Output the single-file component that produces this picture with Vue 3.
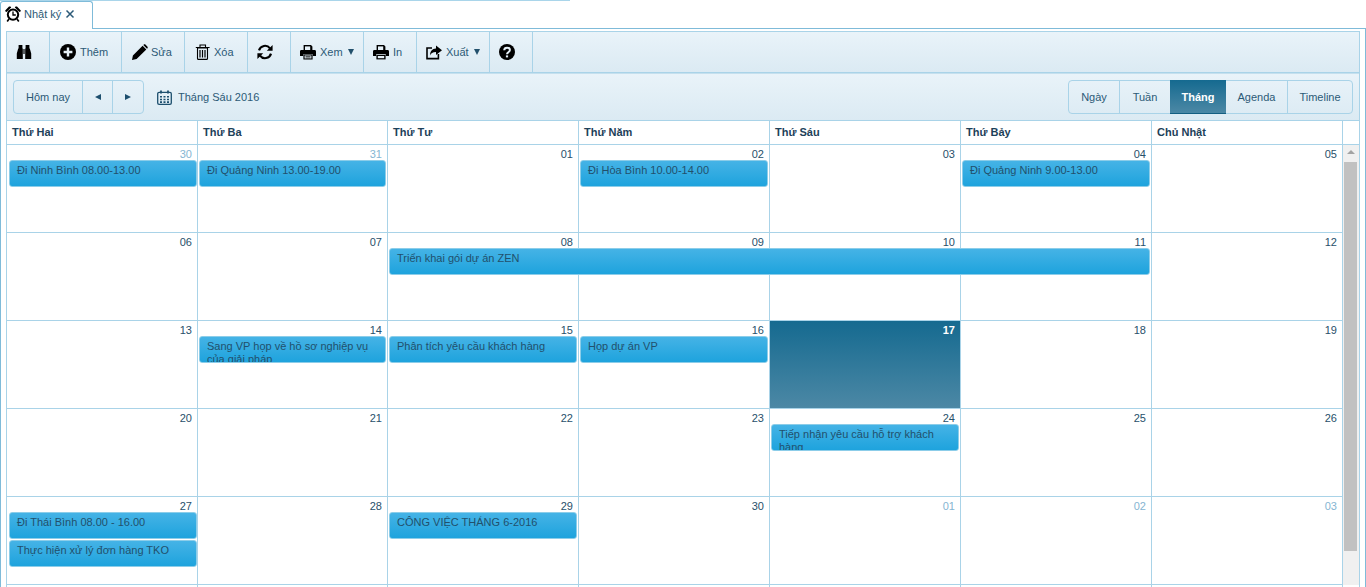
<script setup>
const days = ['Thứ Hai', 'Thứ Ba', 'Thứ Tư', 'Thứ Năm', 'Thứ Sáu', 'Thứ Bảy', 'Chủ Nhật']

// other: ngày thuộc tháng khác, today: ô hôm nay
const weeks = [
  {
    cells: [
      { n: '30', other: true }, { n: '31', other: true }, { n: '01' }, { n: '02' }, { n: '03' }, { n: '04' }, { n: '05' },
    ],
    events: [
      { col: 1, span: 1, row: 2, text: 'Đi Ninh Bình 08.00-13.00' },
      { col: 2, span: 1, row: 2, text: 'Đi Quảng Ninh 13.00-19.00' },
      { col: 4, span: 1, row: 2, text: 'Đi Hòa Bình 10.00-14.00' },
      { col: 6, span: 1, row: 2, text: 'Đi Quảng Ninh 9.00-13.00' },
    ],
  },
  {
    cells: [{ n: '06' }, { n: '07' }, { n: '08' }, { n: '09' }, { n: '10' }, { n: '11' }, { n: '12' }],
    events: [{ col: 3, span: 4, row: 2, text: 'Triển khai gói dự án ZEN' }],
  },
  {
    cells: [{ n: '13' }, { n: '14' }, { n: '15' }, { n: '16' }, { n: '17', today: true }, { n: '18' }, { n: '19' }],
    events: [
      { col: 2, span: 1, row: 2, text: 'Sang VP họp về hồ sơ nghiệp vụ của giải pháp' },
      { col: 3, span: 1, row: 2, text: 'Phân tích yêu cầu khách hàng' },
      { col: 4, span: 1, row: 2, text: 'Họp dự án VP' },
    ],
  },
  {
    cells: [{ n: '20' }, { n: '21' }, { n: '22' }, { n: '23' }, { n: '24' }, { n: '25' }, { n: '26' }],
    events: [{ col: 5, span: 1, row: 2, text: 'Tiếp nhận yêu cầu hỗ trợ khách hàng' }],
  },
  {
    cells: [
      { n: '27' }, { n: '28' }, { n: '29' }, { n: '30' }, { n: '01', other: true }, { n: '02', other: true }, { n: '03', other: true },
    ],
    events: [
      { col: 1, span: 1, row: 2, text: 'Đi Thái Bình 08.00 - 16.00' },
      { col: 1, span: 1, row: 4, text: 'Thực hiện xử lý đơn hàng TKO' },
      { col: 3, span: 1, row: 2, text: 'CÔNG VIỆC THÁNG 6-2016' },
    ],
  },
  {
    cells: [{ n: '' }, { n: '' }, { n: '' }, { n: '' }, { n: '' }, { n: '' }, { n: '' }],
    events: [],
  },
]

const views = ['Ngày', 'Tuần', 'Tháng', 'Agenda', 'Timeline']
</script>

<template>
  <div class="page">
    <div class="topline"></div>
    <div class="tabs">
      <div class="tab">
        <svg class="tab__clock" viewBox="0 0 16 16" width="16" height="16">
          <circle cx="8" cy="8.6" r="5.2" fill="#fff" stroke="#000" stroke-width="2" />
          <path d="M8 5.4v3.6h2.8" fill="none" stroke="#000" stroke-width="1.3" />
          <path d="M.2 4.6 4 .6c1-.5 2 0 2.2.9L1.5 6C.7 6 .1 5.4.2 4.6zM15.8 4.6 12 .6c-1-.5-2 0-2.2.9L14.5 6c.8 0 1.4-.6 1.3-1.4z" fill="#000" />
          <path d="M4 13l-1.8 2.4M12 13l1.8 2.4" stroke="#000" stroke-width="1.7" />
        </svg>
        <span>Nhật ký</span>
        <svg class="tab__close" viewBox="0 0 10 10" width="10" height="10">
          <path d="M1.5 1.5l7 7M8.5 1.5l-7 7" stroke="#2b5a78" stroke-width="1.5" />
        </svg>
      </div>
    </div>

    <div class="panel">
      <div class="inner">
        <div class="toolbar">
          <button class="tool">
            <svg viewBox="0 0 16 16" width="16" height="16">
              <path d="M2.6 1h3.8v3.4h.4V15h-6V9.600l1.400-5.200h.4zM9.600 1h3.800v3.400h.4l1.400 5.200V15h-6V4.400h.4zM7.400 5h1.200v5H7.400z" fill="#000" />
            </svg>
          </button>
          <button class="tool">
            <svg viewBox="0 0 16 16" width="16" height="16">
              <circle cx="8" cy="8" r="8" fill="#000" />
              <path d="M8 3.6v8.8M3.6 8h8.8" stroke="#e6f1f8" stroke-width="2.4" />
            </svg>
            <span>Thêm</span>
          </button>
          <button class="tool">
            <svg viewBox="0 0 16 16" width="16" height="16">
              <path d="M0 16l.9-4.6L10.6 1.700l3.700 3.700L4.600 15.100zM11.600.7c.6-.6 1.400-.6 2 0l1.700 1.700c.6.6.6 1.400 0 2l-.3.3-3.700-3.700z" fill="#000" />
            </svg>
            <span>Sửa</span>
          </button>
          <button class="tool">
            <svg viewBox="0 0 16 16" width="16" height="16">
              <path d="M2.5 4h10v10.400c0 .6-.4 1-1 1h-8c-.6 0-1-.4-1-1zM.8 3.500h13.800M5 3V1h5.500v2" fill="none" stroke="#000" stroke-width="1.1" />
              <path d="M5 6v7.500M7.500 6v7.500M10 6v7.500" stroke="#000" stroke-width="1.2" />
            </svg>
            <span>Xóa</span>
          </button>
          <button class="tool">
            <svg viewBox="0 0 16 16" width="16" height="16">
              <path d="M2 6.400A6.200 6.200 0 0 1 13 4.400M14 9.600A6.200 6.200 0 0 1 3 11.600" fill="none" stroke="#000" stroke-width="2.1" />
              <path d="M15.600 1v5.800H9.800zM.4 15V9.200h5.800z" fill="#000" />
            </svg>
          </button>
          <button class="tool">
            <svg viewBox="0 0 16 16" width="16" height="16">
              <path d="M3.600 1h7.400l1.400 1.400V6H3.600zM0 7.400C0 6.600.6 6 1.400 6h13.200c.8 0 1.400.6 1.400 1.400V12h-3.200v-1.800H3.200V12H0z" fill="#000" />
              <path d="M5 2.400h5.200V6H5z" fill="#e6f1f8" />
              <path d="M4 11h8v4H4z" fill="#e6f1f8" stroke="#000" stroke-width="1.2" />
              <path d="M5.500 12.600h5M5.500 14h5" stroke="#000" stroke-width=".7" />
            </svg>
            <span>Xem</span>
            <i class="caret"></i>
          </button>
          <button class="tool">
            <svg viewBox="0 0 16 16" width="16" height="16">
              <path d="M3.600 1h7.400l1.400 1.400V6H3.600zM0 7.400C0 6.600.6 6 1.400 6h13.200c.8 0 1.400.6 1.400 1.400V12h-3.200v-1.800H3.200V12H0z" fill="#000" />
              <path d="M5 2.400h5.200V6H5z" fill="#e6f1f8" />
              <path d="M3.400 11h9.200v4.400H3.400z" fill="#000" />
              <path d="M4.800 12h6.400v2.200H4.800z" fill="#e6f1f8" />
            </svg>
            <span>In</span>
          </button>
          <button class="tool">
            <svg viewBox="0 0 16 16" width="16" height="16">
              <path d="M6 4H1v10.600h11.400V10" fill="none" stroke="#000" stroke-width="1.6" />
              <path d="M10 1.600l6 4.600-6 4.700V8C6.600 8 4.800 9.200 4 11.600 4 7.200 6.200 4.600 10 4.400z" fill="#000" />
            </svg>
            <span>Xuất</span>
            <i class="caret"></i>
          </button>
          <button class="tool">
            <svg viewBox="0 0 16 16" width="16" height="16">
              <circle cx="8" cy="8" r="8" fill="#000" />
              <path d="M5.200 6.200C5.300 4.600 6.400 3.700 8 3.700c1.700 0 2.900 1 2.900 2.400 0 2.200-2.900 2.200-2.900 4.200" fill="none" stroke="#e6f1f8" stroke-width="2" />
              <path d="M6.900 11.400h2.200v2H6.900z" fill="#e6f1f8" />
            </svg>
          </button>
        </div>

        <div class="nav">
          <div class="group">
            <button class="group__btn group__btn--today">Hôm nay</button>
            <button class="group__btn group__btn--arrow"><i class="arrow arrow--left"></i></button>
            <button class="group__btn group__btn--arrow"><i class="arrow arrow--right"></i></button>
          </div>
          <svg class="nav__cal" viewBox="0 0 15 15" width="15" height="15">
            <rect x=".7" y="2.3" width="13.6" height="12" rx="1.4" fill="none" stroke="#1d4f6e" stroke-width="1.3" />
            <path d="M4 .4v3.200M11 .4v3.200" stroke="#1d4f6e" stroke-width="1.8" />
            <path d="M3 6h2v1.600H3zM6.500 6h2v1.600h-2zM10 6h2v1.600h-2zM3 8.700h2v1.600H3zM6.500 8.700h2v1.600h-2zM10 8.700h2v1.600h-2zM3 11.300h2v1.600H3zM6.500 11.300h2v1.600h-2zM10 11.300h2v1.600h-2z" fill="#1d4f6e" />
          </svg>
          <span class="nav__title">Tháng Sáu 2016</span>
          <div class="views">
            <button
              v-for="v in views"
              :key="v"
              class="views__btn"
              :class="{ 'views__btn--on': v === 'Tháng' }"
            >{{ v }}</button>
          </div>
        </div>

        <div class="head">
          <div class="cols">
            <div v-for="d in days" :key="d" class="head__col">{{ d }}</div>
          </div>
        </div>

        <div class="body">
          <div class="weeks">
            <div v-for="(w, i) in weeks" :key="i" class="week cols">
              <div
                v-for="(c, j) in w.cells"
                :key="j"
                class="cell"
                :class="{ 'cell--other': c.other, 'cell--today': c.today }"
                :style="{ gridColumn: j + 1 }"
              >{{ c.n }}</div>
              <div
                v-for="e in w.events"
                :key="e.text"
                class="event"
                :class="{ 'event--first': e.col === 1 }"
                :style="{ gridColumn: `${e.col} / span ${e.span}`, gridRow: e.row }"
              >{{ e.text }}</div>
            </div>
          </div>
          <div class="scroll">
            <i class="scroll__up"></i>
            <div class="scroll__thumb"></div>
          </div>
        </div>
      </div>
    </div>
  </div>
</template>

<style>
html, body { margin: 0; background: #fff; overflow: hidden; }
</style>

<style scoped>
.page {
  height: 587px;
  overflow: hidden;
  font-family: "Liberation Sans", Arial, sans-serif;
  font-size: 11px;
  color: #2c5a76;
}
button {
  font: inherit;
  color: inherit;
  background: none;
  border: 0;
  padding: 0;
  margin: 0;
}

.topline { width: 570px; height: 1px; background: #a9d5ea; }
.tabs { height: 27px; }
.tab {
  position: relative;
  z-index: 2;
  box-sizing: border-box;
  width: 93px;
  height: 28px;
  display: flex;
  align-items: center;
  padding: 0 0 3px 4px;
  border: 1px solid #7fbbd9;
  border-bottom: 0;
  border-radius: 3px 3px 0 0;
  background: #fff;
}
.tab__clock { margin-right: 3px; }
.tab__close { margin-left: 4px; }

.panel {
  box-sizing: border-box;
  height: 600px;
  border: 1px solid #7fbbd9;
  padding: 2px 5px 0;
}
.inner {
  border: 1px solid #a9d3e8;
  height: 100%;
}

.toolbar {
  display: flex;
  height: 40px;
  border-bottom: 1px solid #a9d3e8;
  background: linear-gradient(#e9f3f9, #dbeaf3);
}
.tool {
  box-sizing: border-box;
  display: flex;
  align-items: center;
  gap: 4px;
  padding: 0 0 0 9px;
  border-right: 1px solid #a9d3e8;
  white-space: nowrap;
}
.tool:nth-child(1) { width: 43px; }
.tool:nth-child(2) { width: 72px; padding-left: 10px; }
.tool:nth-child(3) { width: 63px; padding-left: 10px; gap: 3px; }
.tool:nth-child(4) { width: 63px; padding-left: 10px; gap: 3px; }
.tool:nth-child(5) { width: 43px; }
.tool:nth-child(6) { width: 73px; }
.tool:nth-child(7) { width: 53px; }
.tool:nth-child(8) { width: 73px; }
.tool:nth-child(9) { width: 43px; }
.caret {
  width: 0;
  height: 0;
  margin-left: 1px;
  border-left: 3.5px solid transparent;
  border-right: 3.5px solid transparent;
  border-top: 6px solid #22506c;
}

.nav {
  display: flex;
  align-items: center;
  height: 46px;
  padding: 0 6px;
  border-top: 1px solid #c5e0ee;
  border-bottom: 1px solid #a9d3e8;
  background: linear-gradient(#e9f3f9, #dbeaf3);
}
.group, .views {
  display: flex;
  box-sizing: border-box;
  height: 34px;
  border: 1px solid #a9d3e8;
  border-radius: 4px;
}
.group__btn { border-right: 1px solid #a9d3e8; display: flex; align-items: center; justify-content: center; }
.group__btn:last-child { border-right: 0; }
.group__btn--today { width: 69px; }
.group__btn--arrow { width: 30px; }
.arrow { width: 0; height: 0; border-top: 3.5px solid transparent; border-bottom: 3.5px solid transparent; }
.arrow--left { border-right: 6px solid #1d4f6e; }
.arrow--right { border-left: 6px solid #1d4f6e; }
.nav__cal { margin-left: 13px; }
.nav__title { margin-left: 6px; }
.views { margin-left: auto; }
.views__btn { box-sizing: border-box; border-right: 1px solid #a9d3e8; text-align: center; }
.views__btn:nth-child(1) { width: 51px; }
.views__btn:nth-child(2) { width: 50px; border-right: 0; }
.views__btn:nth-child(3) { width: 56px; }
.views__btn:nth-child(4) { width: 62px; }
.views__btn:nth-child(5) { width: 64px; border-right: 0; }
.views__btn--on {
  margin: -1px 0;
  border: 0;
  border-bottom: 1px solid #155f82;
  font-weight: 700;
  color: #fff;
  background: linear-gradient(#156a90, #4c88a5);
}

.cols {
  width: 1336px;
  display: grid;
  grid-template-columns: 191px 190px repeat(5, 191px);
}
.head {
  border-bottom: 1px solid #a9d3e8;
  background: #fff;
}
.head__col {
  box-sizing: border-box;
  height: 23px;
  line-height: 22px;
  padding-left: 5px;
  border-right: 1px solid #a9d3e8;
  font-weight: 700;
  color: #1d4159;
}

.body { display: flex; }
.weeks { width: 1336px; flex: none; }
.week {
  grid-template-rows: 15px 27px 1px 27px 1fr;
  height: 88px;
}
.cell {
  grid-row: 1 / -1;
  box-sizing: border-box;
  padding: 3px 5px 0 0;
  border-right: 1px solid #a9d3e8;
  border-bottom: 1px solid #a9d3e8;
  text-align: right;
  line-height: 13px;
  color: #28506a;
  background: #fff;
}
.cell--other { color: #85b5d2; }
.cell--today {
  font-weight: 700;
  color: #fff;
  background: linear-gradient(#156a90, #4c88a5);
}
.event {
  box-sizing: border-box;
  height: 27px;
  margin: 0 2px 0 1px;
  padding: 3px 7px 0;
  overflow: hidden;
  border: 1px solid #8ccde9;
  border-radius: 3px;
  line-height: 13px;
  color: #22506c;
  background: linear-gradient(#45b3e6, #1ea3dd);
}
.event--first { margin: 0 1px 0 2px; }

.scroll {
  flex: none;
  box-sizing: border-box;
  width: 16px;
  height: 440px;
  padding: 5px 2px 0 1px;
  background: #f0f0f0;
  display: flex;
  flex-direction: column;
  align-items: center;
}
.scroll__up {
  width: 0;
  height: 0;
  border-left: 4px solid transparent;
  border-right: 4px solid transparent;
  border-bottom: 4px solid #a3a3a3;
}
.scroll__thumb {
  width: 13px;
  height: 389px;
  margin-top: 8px;
  background: #c1c1c1;
}
</style>
